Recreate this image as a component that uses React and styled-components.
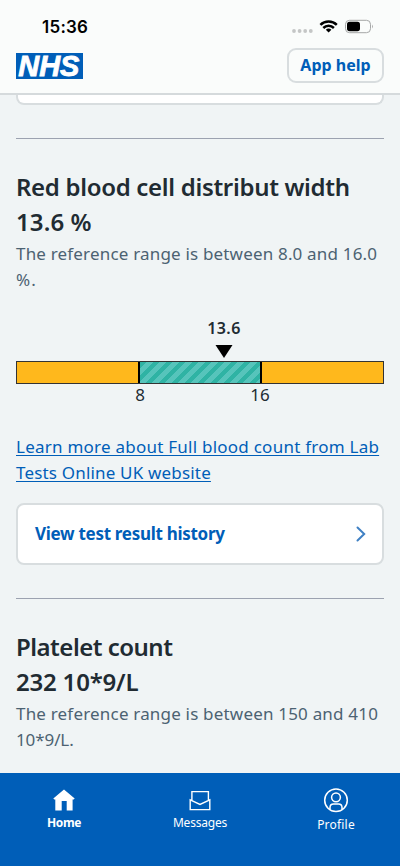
import React from "react";
import styled, { createGlobalStyle } from "styled-components";

const Global = createGlobalStyle`
  * { box-sizing: border-box; }
  body { margin: 0; background: #f0f4f5; font-family: "Noto Sans", "Open Sans", sans-serif; color: #212b32; }
  h2, p { margin: 0; }
`;
const Screen = styled.div`
  width: 400px; height: 866px; display: flex; flex-direction: column; overflow: hidden; background: #f0f4f5;
`;
const Header = styled.header`
  flex: none; height: 95px; background: #fafcfb; border-bottom: 2px solid #d5dadc;
`;
const StatusBar = styled.div`
  height: 48px; padding: 6px 27px 0 42px; display: flex; align-items: center; justify-content: space-between;
`;
const Time = styled.span`
  font: 600 17px/20px Inter, sans-serif; color: #000; letter-spacing: 0.25px;
`;
const StatusIcons = styled.svg`
  display: block; width: 81px; height: 16px;
`;
const Brand = styled.div`
  display: flex; align-items: flex-start; justify-content: space-between; padding: 0 16px;
`;
const Logo = styled.svg`
  display: block; width: 67px; height: 26px; margin-top: 5px; overflow: visible;
`;
const HelpButton = styled.button`
  width: 97px; height: 35px; padding: 0 0 2px; border: 2px solid #d8dddf; border-radius: 9px; background: #fafcfb;
  font: 700 16px/22px "Noto Sans", sans-serif; color: #005eb8; letter-spacing: 0; white-space: nowrap;
`;
const Content = styled.main`
  flex: 1; min-height: 0; overflow: hidden; padding: 0 16px;
`;
const CardEnd = styled.div`
  height: 10px; background: #fff; border: 2px solid #d8dddf; border-top: 0; border-radius: 0 0 8px 8px;
`;
const Divider = styled.hr`
  height: 1px; margin: 33px 0 0; border: 0; background: #9ca2b0;
`;
const Result = styled.section`
  padding-top: 30px;
`;
const Heading = styled.h2`
  font-size: 24px; line-height: 35px; font-weight: 600; letter-spacing: ${(p) => p.$track || 0}px; white-space: nowrap;
`;
const Line = styled.span`
  display: block; letter-spacing: ${(p) => p.$track || 0}px;
`;
const Range = styled.p`
  margin-top: 2px; font-size: 17px; line-height: 26px; color: #4c6272; white-space: nowrap;
`;
const Chart = styled.figure`
  margin: 23px 0 0; height: 118px; display: flex; flex-direction: column;
`;
const Marker = styled.div`
  width: 60px; margin-left: 178px; height: 45px; display: flex; flex-direction: column; align-items: center;
  font-size: 16px; line-height: 24px; font-weight: 600; letter-spacing: 0.4px;
`;
const Arrow = styled.svg`
  display: block; width: 18px; height: 13px; margin-top: 5px;
`;
const Bar = styled.div`
  height: 23px; flex: none; display: grid; grid-template-columns: 121px 1fr 121px; border: 1px solid #333; background: #ffb81c;
`;
const Normal = styled.div`
  grid-column: 2; border: solid #000; border-width: 0 2px;
  background: repeating-linear-gradient(135deg, #2fb3a4 0 4.6px, #56c4bb 4.6px 9.2px);
`;
const Scale = styled.div`
  display: grid; grid-template-columns: 120px 120px; margin: -1px 0 0 64px; text-align: center; font-size: 17px; line-height: 24px;
`;
const Link = styled.a`
  display: block; font-size: 17px; line-height: 26px; color: #005eb8; white-space: nowrap;
  ${Line} {
    text-decoration: underline; text-decoration-thickness: 1px; text-underline-offset: 2px; text-decoration-skip-ink: none;
  }
`;
const HistoryCard = styled.button`
  width: 100%; height: 62px; margin-top: 17px; padding: 0 16px 0 17px; display: flex; align-items: center; justify-content: space-between;
  background: #fff; border: 2px solid #d8dddf; border-radius: 8px; color: #005eb8;
  font: 700 17px/24px "Noto Sans", sans-serif; letter-spacing: -0.29px;
`;
const Nav = styled.nav`
  flex: none; height: 93px; background: #005eb8; color: #fff; display: grid; grid-template-columns: repeat(3, 136px); margin-left: -4px; width: 408px;
`;
const Tab = styled.div`
  display: flex; flex-direction: column; align-items: center; gap: ${(p) => p.$gap || 2}px; padding-top: 14px;
  font-size: 12px; line-height: 16px; font-weight: ${(p) => (p.$active ? 700 : 400)}; letter-spacing: ${(p) => p.$track || 0}px;
  svg { display: block; width: 26px; height: 26px; }
`;

export default function App() {
  return (
    <Screen>
      <Global />
      <Header>
        <StatusBar>
          <Time>15:36</Time>
          <StatusIcons viewBox="0 0 81 16">
            <g fill="#c4c6c6">
              {[2, 7.6, 13.2, 18.8].map((x) => <circle key={x} cx={x} cy="12" r="1.9" />)}
            </g>
            <g fill="none" stroke="#000" strokeWidth="2.5">
              <path d="M28.4 5.8 A11.6 11.6 0 0 1 44.8 5.8" />
              <path d="M31.3 9 A7.5 7.5 0 0 1 41.9 9" />
            </g>
            <path d="M33.8 10.8 A4 4 0 0 1 39.4 10.8 L36.6 13.6 Z" />
            <rect x="53.5" y="1.3" width="25" height="12.4" rx="4" fill="none" stroke="#a5a7a7" />
            <rect x="55" y="2.8" width="13" height="9.4" rx="2.6" />
            <path d="M80 5.6 Q81.4 7.6 80 9.6Z" fill="#999" />
          </StatusIcons>
        </StatusBar>
        <Brand>
          <Logo viewBox="0 0 67 26">
            <rect width="67" height="26" fill="#005eb8" />
            <text x="2.3" y="23.4" textLength="61" lengthAdjust="spacingAndGlyphs" fontFamily="Liberation Sans" fontWeight="700" fontStyle="italic" fontSize="30" fill="#fff" stroke="#fff" strokeWidth="0.9">NHS</text>
          </Logo>
          <HelpButton>App help</HelpButton>
        </Brand>
      </Header>
      <Content>
        <CardEnd />
        <Divider />
        <Result>
          <Heading $track={-0.31}>Red blood cell distribut width</Heading>
          <Heading $track={0.1}>13.6 %</Heading>
          <Range>
            <Line $track={0.18}>The reference range is between 8.0 and 16.0</Line>
            <Line $track={1}>%.</Line>
          </Range>
          <Chart>
            <Marker>
              13.6
              <Arrow viewBox="0 0 18 13"><path d="M0.5 0H17.5L9 13Z" /></Arrow>
            </Marker>
            <Bar><Normal /></Bar>
            <Scale><span>8</span><span>16</span></Scale>
          </Chart>
          <Link>
            <Line $track={0.24}>Learn more about Full blood count from Lab</Line>
            <Line $track={0.18}>Tests Online UK website</Line>
          </Link>
          <HistoryCard>
            View test result history
            <svg width="10" height="16" viewBox="0 0 10 16" fill="none" stroke="#3f80c4" strokeWidth="2" strokeLinecap="round"><path d="M1.5 1.5 8.2 8 1.5 14.5" /></svg>
          </HistoryCard>
        </Result>
        <Divider />
        <Result>
          <Heading $track={-0.5}>Platelet count</Heading>
          <Heading $track={-0.2}>232 10*9/L</Heading>
          <Range>
            <Line $track={0.19}>The reference range is between 150 and 410</Line>
            <Line $track={-0.1}>10*9/L.</Line>
          </Range>
        </Result>
      </Content>
      <Nav>
        <Tab $active $track={-0.35}>
          <svg viewBox="0 0 26 26" fill="#fff"><path d="M13 2.5 23.7 11.5 22.7 12.6H21.6V23.4H15.7V14H10.7V23.4H4.3V12.6H3.3L2.3 11.5Z" /></svg>
          Home
        </Tab>
        <Tab $track={-0.2}>
          <svg viewBox="0 0 26 26" fill="none" stroke="#fff" strokeWidth="1.4"><path d="M4.9 13.6V4.6H21.4V13.6M3.2 12.9 13 17.5 22.8 12.9V22.6H3.2Z" /></svg>
          Messages
        </Tab>
        <Tab $gap={4} $track={0.2}>
          <svg viewBox="0 0 26 26" fill="none" stroke="#fff" strokeWidth="1.5"><circle cx="13" cy="13.2" r="11.3" /><circle cx="13" cy="10.3" r="4.4" /><path d="M7 22.3V20.5Q7 17 10.5 17H15.5Q19 17 19 20.5V22.3" /></svg>
          Profile
        </Tab>
      </Nav>
    </Screen>
  );
}
